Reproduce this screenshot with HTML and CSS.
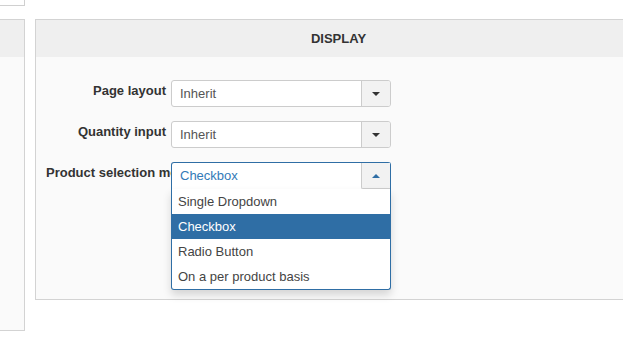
FILE: index.html
```html
<!DOCTYPE html>
<html lang="en">
<head>
    <meta charset="UTF-8">
    <title>Display settings</title>
    <link rel="stylesheet" href="styles.css">
</head>
<body>
<div class="topBox"></div>
<div class="panels">
    <div class="panel sidePanel">
        <div class="panelHead"></div>
        <div class="panelBody"></div>
    </div>
    <div class="panel mainPanel">
        <div class="panelHead">DISPLAY</div>
        <div class="panelBody">
            <div class="formRow">
                <label class="formLabel">Page layout</label>
                <div class="select">
                    <span class="selectText">Inherit</span>
                    <span class="selectBtn"><i class="caret"></i></span>
                </div>
            </div>
            <div class="formRow">
                <label class="formLabel">Quantity input</label>
                <div class="select">
                    <span class="selectText">Inherit</span>
                    <span class="selectBtn"><i class="caret"></i></span>
                </div>
            </div>
            <div class="formRow">
                <label class="formLabel">Product selection mode</label>
                <div class="select open">
                    <span class="selectText">Checkbox</span>
                    <span class="selectBtn"><i class="caret up"></i></span>
                    <ul class="selectMenu">
                        <li>Single Dropdown</li>
                        <li class="active">Checkbox</li>
                        <li>Radio Button</li>
                        <li>On a per product basis</li>
                    </ul>
                </div>
            </div>
        </div>
    </div>
</div>
</body>
</html>
```

FILE: styles.css
```css
* {
    margin: 0;
    padding: 0;
    box-sizing: border-box;
}

html, body {
    overflow: hidden;
}

body {
    background-color: #fff;
    font: 400 13px/18px "Liberation Sans", Arial, sans-serif;
    color: #333;
}

ul {
    list-style: none;
}

.topBox {
    width: 25px;
    height: 6px;
    border-right: 1px solid #d0d0d0;
    border-bottom: 1px solid #d0d0d0;
}

.panels {
    display: flex;
    align-items: flex-start;
    margin-top: 13px;
}

.panel {
    border: 1px solid #d3d3d3;
    background-color: #fafafa;
    flex-shrink: 0;
}

.panelHead {
    height: 37px;
    background-color: #efefef;
    font-weight: 700;
    line-height: 37px;
    text-align: center;
    color: #333;
}

.sidePanel {
    width: 200px;
    margin-left: -175px;
}

.sidePanel .panelBody {
    height: 273px;
}

.mainPanel {
    width: 607px;
    margin-left: 10px;
}

.mainPanel .panelBody {
    height: 242px;
    padding: 23px 0 0 10px;
    display: flex;
    flex-direction: column;
    gap: 14px;
}

.formRow {
    display: flex;
}

/* long labels run under the select, so clip them at its edge */
.formLabel {
    width: 125px;
    padding: 2px 5px 0 0;
    font-weight: 700;
    text-align: right;
    white-space: nowrap;
    overflow: hidden;
    color: #333;
}

.select {
    position: relative;
    width: 220px;
    height: 27px;
    display: flex;
    background-color: #fff;
    border: 1px solid #ccc;
    border-radius: 3px;
}

.selectText {
    flex: 1;
    padding-left: 8px;
    line-height: 25px;
    color: #555;
}

.selectBtn {
    width: 29px;
    display: flex;
    align-items: center;
    justify-content: center;
    background-color: #f2f2f2;
    border-left: 1px solid #ccc;
    border-radius: 0 2px 2px 0;
}

.caret {
    width: 0;
    height: 0;
    border-top: 4px solid #333;
    border-left: 4px solid transparent;
    border-right: 4px solid transparent;
}

.caret.up {
    border-top: 0;
    border-bottom: 4px solid #2f6ea5;
}

.select.open {
    border-color: #2f6ea5;
    border-bottom: 0;
    border-radius: 3px 3px 0 0;
}

.select.open .selectText {
    color: #337ab7;
    line-height: 26px;
}

.select.open .selectBtn {
    border: 1px solid #ccc;
    border-top: 0;
    border-right: 0;
    border-radius: 0 0 0 2px;
    height: 26px;
}

.selectMenu {
    position: absolute;
    top: 26px;
    left: -1px;
    right: -1px;
    background-color: #fff;
    border: 1px solid #2f6ea5;
    border-top: 0;
    border-radius: 0 0 3px 3px;
    box-shadow: 0 5px 8px rgba(0, 0, 0, 0.15);
}

.selectMenu li {
    height: 25px;
    padding-left: 6px;
    line-height: 25px;
    color: #444;
}

.selectMenu li.active {
    background-color: #2f6ea5;
    color: #fff;
}
```
